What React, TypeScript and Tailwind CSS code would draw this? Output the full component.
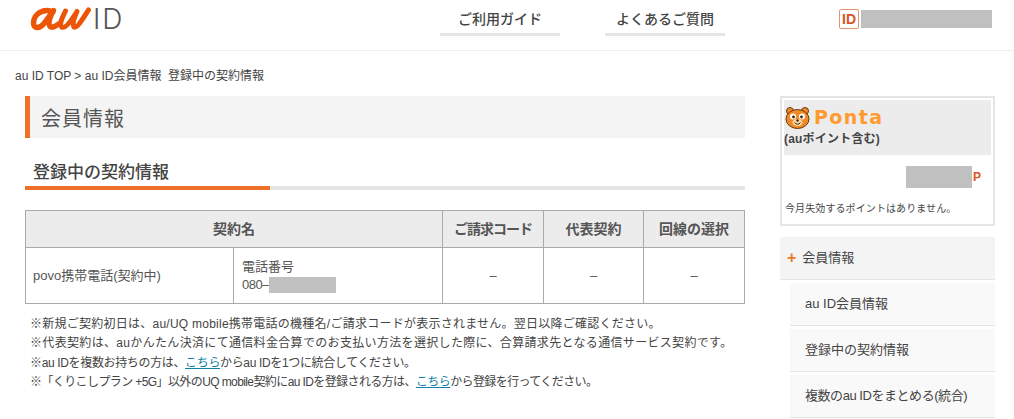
const jp = '"Liberation Sans", "Noto Sans CJK JP", sans-serif';

function AuLogo() {
  return (
    <svg width="62" height="24" viewBox="0 0 62 24" className="block">
      <g fill="none" stroke="#eb5505" strokeLinecap="round" strokeLinejoin="round">
        <path d="M23 5 C14 0.500 3.500 7 3.500 16 C3.500 22.500 10 21.500 14 16.500 C17.500 12 20 8 23.500 3.500 C20.500 9 18 15 19.500 18.500 C21 21.500 25 20 28.500 17" strokeWidth="5.400" />
        <path d="M35.500 4 C32 11 29 17 31.500 20 C35 22 41 14 47 4.500 C44 11 42 17 44 20 C47 21.500 52 13 58.500 3" strokeWidth="5" />
      </g>
    </svg>
  );
}

function Bear() {
  return (
    <svg width="25" height="23" viewBox="0 0 25 23" className="block">
      <circle cx="5" cy="5" r="3.500" fill="#f08a24" stroke="#6b3a10" strokeWidth="1" />
      <circle cx="20" cy="5" r="3.500" fill="#f08a24" stroke="#6b3a10" strokeWidth="1" />
      <ellipse cx="12.500" cy="13" rx="11.500" ry="9.500" fill="#f08a24" stroke="#6b3a10" strokeWidth="1" />
      <ellipse cx="8" cy="10.500" rx="3" ry="3" fill="#fff" />
      <ellipse cx="17" cy="10.500" rx="3" ry="3" fill="#fff" />
      <circle cx="8.500" cy="11" r="1.400" fill="#3b2412" />
      <circle cx="16.500" cy="11" r="1.400" fill="#3b2412" />
      <ellipse cx="12.500" cy="16.500" rx="5" ry="3.500" fill="#fbd9a8" />
      <path d="M9.500 16.500 Q12.500 20 15.500 16.500" fill="none" stroke="#3b2412" strokeWidth="1" />
      <circle cx="12.500" cy="14.500" r="1.200" fill="#3b2412" />
    </svg>
  );
}

function Masked({ className }: { className: string }) {
  return <span className={`block bg-[#c0c0c0] ${className}`} />;
}

const colHead = 'border-l border-[#aaaaaa] flex items-center justify-center font-bold text-[14px] text-[#555555]';
const colCell = 'border-l border-[#aaaaaa] flex items-center justify-center text-[#555555]';
const navItem = 'w-[120px] h-[36px] pt-[6px] flex items-center justify-center border-b-[3px] border-[#e5e5e5] text-[14px] font-medium text-[#444444]';
const subItem = 'h-[43px] bg-[#f9f9f9] border-b border-[#e5e5e5] flex items-center pl-[15px] text-[13px] text-[#444444]';

export default function App() {
  return (
    <div className="w-[1014px] h-[419px] overflow-hidden bg-white text-[#444444] text-[12px]" style={{ fontFamily: jp }}>
      <header className="h-[51px] border-b border-[#eeeeee] flex">
        <div className="w-[440px] pl-[30px] pt-[7px] flex items-start gap-[1px]">
          <AuLogo />
          <span className="text-[28px] leading-[24px] text-[#555555] tracking-[2px]" style={{ fontFamily: '"Inter", sans-serif', fontWeight: 300 }}>ID</span>
        </div>
        <nav className="w-[399px] flex gap-[45px]">
          <a className={navItem}>ご利用ガイド</a>
          <a className={navItem}>よくあるご質問</a>
        </nav>
        <div className="pt-[9px] flex items-start gap-[2px]">
          <span className="w-[20px] h-[20px] border border-[#e8926a] rounded-[2px] flex items-center justify-center text-[14px] font-bold text-[#d9541e] leading-none">ID</span>
          <Masked className="w-[131px] h-[18px] mt-[1px]" />
        </div>
      </header>

      <div className="pl-[15px] pt-[17px] h-[45px] text-[12px] leading-[16px] text-[#444444]">
        au ID TOP &gt; au ID会員情報&nbsp;&nbsp;登録中の契約情報
      </div>

      <div className="flex pl-[25px] gap-[35px]">
        <main className="w-[720px]">
          <h1 className="h-[42px] pt-[3px] bg-[#f4f4f4] border-l-[5px] border-[#f0702a] pl-[11px] flex items-center text-[20px] font-normal text-[#555555] tracking-[1px]">会員情報</h1>
          <div className="relative h-[38px] mt-[14px] border-b-[4px] border-[#e5e5e5] pl-[8px] pt-[10px] text-[17px] leading-[22px] font-medium text-[#444444]">
            登録中の契約情報
            <span className="absolute left-0 bottom-[-4px] w-[245px] h-[4px] bg-[#f0702a]" />
          </div>

          <div className="mt-[20px] border border-[#aaaaaa]">
            <div className="grid grid-cols-[207px_209px_101px_100px_1fr] h-[37px] bg-[#ececec] border-b border-[#aaaaaa]">
              <div className="col-span-2 flex items-center justify-center font-bold text-[14px] text-[#555555]">契約名</div>
              <div className={`${colHead} tracking-[-1px]`}>ご請求コード</div>
              <div className={colHead}>代表契約</div>
              <div className={colHead}>回線の選択</div>
            </div>
            <div className="grid grid-cols-[207px_209px_101px_100px_1fr] h-[55px] text-[13px]">
              <div className="flex items-center pl-[7px] text-[#555555]">povo携帯電話(契約中)</div>
              <div className="border-l border-[#aaaaaa] pl-[8px] flex flex-col justify-center gap-[2px] text-[#555555]">
                <span className="leading-[16px]">電話番号</span>
                <span className="flex items-center leading-[16px] tracking-[-0.5px]">080–<Masked className="w-[67px] h-[16px]" /></span>
              </div>
              <div className={colCell}>–</div>
              <div className={colCell}>–</div>
              <div className={colCell}>–</div>
            </div>
          </div>

          <ul className="mt-[11px] pl-[5px] text-[12px] leading-[19.300px] text-[#444444]">
            <li className="tracking-[0.25px]">※新規ご契約初日は、au/UQ mobile携帯電話の機種名/ご請求コードが表示されません。翌日以降ご確認ください。</li>
            <li className="tracking-[0.33px]">※代表契約は、auかんたん決済にて通信料金合算でのお支払い方法を選択した際に、合算請求先となる通信サービス契約です。</li>
            <li className="tracking-[-0.35px]">※au IDを複数お持ちの方は、<a className="text-[#0f7fa8] underline">こちら</a>からau IDを1つに統合してください。</li>
            <li className="tracking-[-0.6px]">※「くりこしプラン +5G」以外のUQ mobile契約にau IDを登録される方は、<a className="text-[#0f7fa8] underline">こちら</a>から登録を行ってください。</li>
          </ul>
        </main>

        <aside className="w-[215px]">
          <section className="h-[130px] border-2 border-[#e5e5e5] p-[2px]">
            <div className="h-[55px] bg-[#ececec] pt-[5px]">
              <div className="flex items-center gap-[4px] pl-[1px] h-[25px]">
                <Bear />
                <span className="text-[19px] leading-none font-bold text-[#ff9a2e] tracking-[1.4px]" style={{ fontFamily: '"DejaVu Sans", sans-serif' }}>Ponta</span>
              </div>
              <p className="text-[12px] font-bold leading-[16px] mt-[1px] tracking-[0.2px] text-[#444444]">(auポイント含む)</p>
            </div>
            <div className="flex justify-end items-center pt-[11px] pr-[10px]">
              <Masked className="w-[66px] h-[22px]" />
              <span className="ml-[1px] font-bold text-[12px] text-[#d9541e]">P</span>
            </div>
            <p className="mt-[14px] pl-[1px] text-[10px] leading-[14px] tracking-[0.1px] text-[#444444]">今月失効するポイントはありません。</p>
          </section>

          <div className="mt-[11px] h-[43px] bg-[#f4f4f4] border-b border-[#e5e5e5] flex items-center pl-[7px] gap-[6px] text-[13px] text-[#444444]">
            <span className="font-bold text-[16px] text-[#e8792f] leading-none">+</span>
            <span>会員情報</span>
          </div>
          <div className="pl-[10px] pt-[3px] flex flex-col gap-[3px]">
            <a className={subItem}>au ID会員情報</a>
            <a className={subItem}>登録中の契約情報</a>
            <a className={`${subItem} tracking-[-0.45px]`}>複数のau IDをまとめる(統合)</a>
          </div>
        </aside>
      </div>
    </div>
  );
}
